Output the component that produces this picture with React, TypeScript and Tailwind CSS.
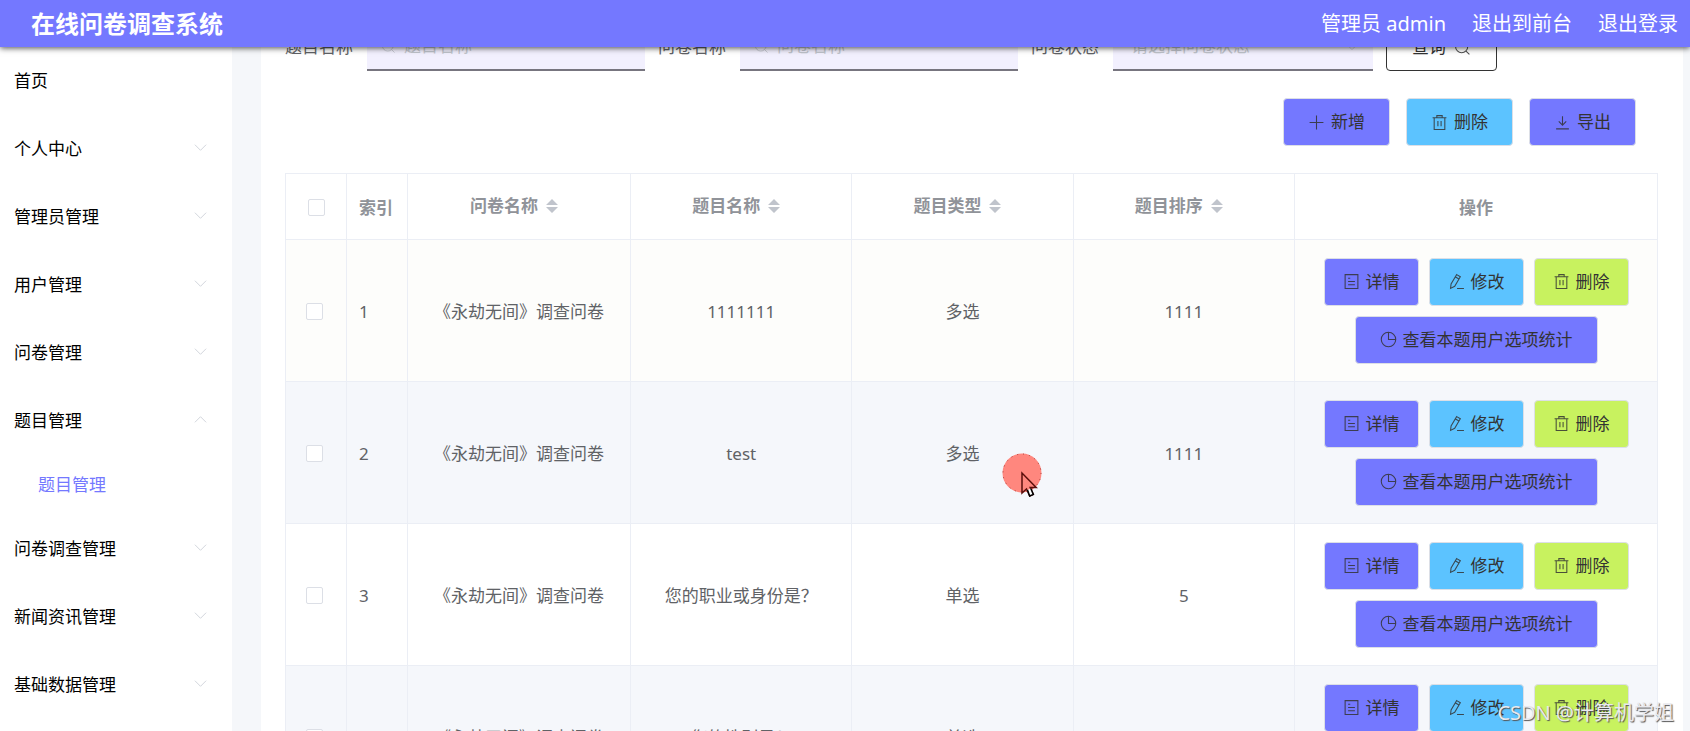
import React, { useState } from "react";
import clsx from "clsx";

interface MenuItem {
    title: string;
    children?: string[];
}

interface Question {
    id: number;
    paper: string;
    name: string;
    type: string;
    sort: number;
}

const menus: MenuItem[] = [
    { title: "首页" },
    { title: "个人中心", children: ["个人信息"] },
    { title: "管理员管理", children: ["管理员管理"] },
    { title: "用户管理", children: ["用户管理"] },
    { title: "问卷管理", children: ["问卷管理"] },
    { title: "题目管理", children: ["题目管理"] },
    { title: "问卷调查管理", children: ["问卷调查管理"] },
    { title: "新闻资讯管理", children: ["新闻资讯管理"] },
    { title: "基础数据管理", children: ["基础数据管理"] },
];

const questions: Question[] = [
    { id: 1, paper: "《永劫无间》调查问卷", name: "1111111", type: "多选", sort: 1111 },
    { id: 2, paper: "《永劫无间》调查问卷", name: "test", type: "多选", sort: 1111 },
    { id: 3, paper: "《永劫无间》调查问卷", name: "您的职业或身份是？", type: "单选", sort: 5 },
    { id: 4, paper: "《永劫无间》调查问卷", name: "您的性别是？", type: "单选", sort: 4 },
];

// Line icons, all on a 16x16 grid
const iconPaths = {
    plus: "M8 1.5v13M1.5 8h13",
    trash: "M1.5 3.5h13M3 3.5v11h10v-11M5.5 3.5v-2h5v2M6.5 6.5v5M9.5 6.5v5",
    download: "M8 2v8.5M4.5 7L8 10.5 11.5 7M2 14h12",
    doc: "M2 1.5h12v13H2zM4.8 5h2M4.8 8h6.4M4.8 11h6.4",
    edit: "M8.2 1.5l3.4 2-5.3 9-3.9 2 .5-4.2zM7 3.7l3.4 2M8.5 14.5h6.5",
    pie: "M8 1.2a6.8 6.8 0 1 0 6.8 6.8H8zM8 1.2A6.8 6.8 0 0 1 14.8 8",
    search: "M7.2 1.5a5.7 5.7 0 1 0 0 11.4 5.7 5.7 0 0 0 0-11.4zM11.3 11.3l3.2 3.2",
    down: "M2 5l6 6 6-6",
    up: "M2 11l6-6 6 6",
};

const Icon = ({
    name,
    className = "size-[17px]",
}: {
    name: keyof typeof iconPaths;
    className?: string;
}) => (
    <svg
        viewBox="0 0 16 16"
        fill="none"
        stroke="currentColor"
        strokeOpacity="0.85"
        className={clsx("shrink-0", className)}
        aria-hidden="true"
    >
        <path d={iconPaths[name]} />
    </svg>
);

const tones = {
    primary: "bg-[#7478ff]",
    info: "bg-[#5cc3ff]",
    danger: "bg-[#c8f25f]",
};

const ActionButton = ({
    icon,
    tone,
    wide,
    children,
}: {
    icon: keyof typeof iconPaths;
    tone: keyof typeof tones;
    wide?: boolean;
    children: React.ReactNode;
}) => (
    <button
        type="button"
        className={clsx(
            "flex h-12 items-center gap-1.5 rounded border border-[#dcdfe6] text-[#333]",
            wide ? "px-6" : "px-[18px]",
            tones[tone]
        )}
    >
        <Icon name={icon} />
        {children}
    </button>
);

const SearchInput = ({ id, label }: { id: string; label: string }) => (
    <div className="flex items-center">
        <label htmlFor={id} className="w-[82px]">
            {label}
        </label>
        <div className="flex h-12 w-[278px] items-center gap-2 border-b-2 border-[#77757f] bg-[#f2f0fe] pl-3.5 text-[#c0c4cc]">
            <Icon name="search" className="size-[15px]" />
            <input
                id={id}
                type="text"
                placeholder={label}
                className="w-full min-w-0 bg-transparent outline-none placeholder:text-[#c0c4cc]"
            />
        </div>
    </div>
);

const CheckBox = ({ label }: { label: string }) => (
    <input
        type="checkbox"
        aria-label={label}
        className="block size-[17px] appearance-none rounded-xs border border-[#dcdfe6] bg-white checked:bg-[#7478ff]"
    />
);

const SortHead = ({ children }: { children: React.ReactNode }) => (
    <th className="border border-[#ebeef5] pr-2.5 pb-0.5">
        <div className="flex items-center justify-center gap-2">
            {children}
            <svg viewBox="0 0 12 16" className="h-4 w-3 fill-[#c0c4cc]" aria-hidden="true">
                <path d="M6 1l6 6H0zM6 15l6-6H0z" />
            </svg>
        </div>
    </th>
);

const Header = () => (
    <header className="relative z-20 flex h-[47px] shrink-0 items-center justify-between bg-[#7478ff] pr-3 pl-[31px] text-white shadow-[0_1px_6px_rgba(0,0,0,0.7)]">
        <h1 className="text-2xl font-bold">在线问卷调查系统</h1>
        <nav className="flex gap-[26px] text-xl">
            <span>管理员 admin</span>
            <a href="#front">退出到前台</a>
            <a href="#login">退出登录</a>
        </nav>
    </header>
);

const Sidebar = () => {
    const [open, setOpen] = useState<string>("题目管理");

    return (
        <aside className="w-[232px] shrink-0 overflow-hidden bg-white text-black">
            {menus.map((menu) => (
                <div key={menu.title}>
                    <button
                        type="button"
                        onClick={() => setOpen(open === menu.title ? "" : menu.title)}
                        className="flex h-[68px] w-full items-center justify-between pr-6 pl-3.5"
                    >
                        {menu.title}
                        {menu.children && (
                            <Icon
                                name={open === menu.title ? "up" : "down"}
                                className="mb-1 size-[15px] text-[#c8ccd4]"
                            />
                        )}
                    </button>
                    {open === menu.title &&
                        menu.children?.map((child) => (
                            <a
                                key={child}
                                href="#question"
                                className="flex h-[60px] items-center pl-[38px] text-[#7478ff]"
                            >
                                {child}
                            </a>
                        ))}
                </div>
            ))}
        </aside>
    );
};

const QuestionTable = () => (
    <table className="w-full table-fixed border-collapse text-center text-[#606266]">
        <colgroup>
            <col className="w-[61px]" />
            <col className="w-[61px]" />
            <col className="w-[223px]" />
            <col />
            <col />
            <col />
            <col className="w-[363px]" />
        </colgroup>
        <thead>
            <tr className="h-[66px] text-[#909399]">
                <th className="border border-[#ebeef5] pt-0.5 pl-[22px]">
                    <CheckBox label="全选" />
                </th>
                <th className="border border-[#ebeef5] pt-0.5 pl-3 text-left">索引</th>
                <SortHead>问卷名称</SortHead>
                <SortHead>题目名称</SortHead>
                <SortHead>题目类型</SortHead>
                <SortHead>题目排序</SortHead>
                <th className="border border-[#ebeef5] pt-0.5">操作</th>
            </tr>
        </thead>
        <tbody>
            {questions.map((q, index) => (
                <tr
                    key={q.id}
                    className={clsx(
                        "h-[142px]",
                        index % 2 ? "bg-[#f5f7fb]" : index === 0 ? "bg-[#fdfdfb]" : "bg-white"
                    )}
                >
                    <td className="border border-[#ebeef5] pt-0.5 pl-5">
                        <CheckBox label={`选择 ${q.id}`} />
                    </td>
                    <td className="border border-[#ebeef5] pt-0.5 pl-3 text-left">{q.id}</td>
                    <td className="border border-[#ebeef5] pt-0.5">{q.paper}</td>
                    <td className="border border-[#ebeef5] pt-0.5">{q.name}</td>
                    <td className="border border-[#ebeef5] pt-0.5">{q.type}</td>
                    <td className="border border-[#ebeef5] pt-0.5">{q.sort}</td>
                    <td className="border border-[#ebeef5]">
                        <div className="flex flex-wrap justify-center gap-2.5">
                            <ActionButton icon="doc" tone="primary">
                                详情
                            </ActionButton>
                            <ActionButton icon="edit" tone="info">
                                修改
                            </ActionButton>
                            <ActionButton icon="trash" tone="danger">
                                删除
                            </ActionButton>
                            <ActionButton icon="pie" tone="primary" wide>
                                查看本题用户选项统计
                            </ActionButton>
                        </div>
                    </td>
                </tr>
            ))}
        </tbody>
    </table>
);

const App = () => (
    <div className="relative flex h-screen flex-col overflow-hidden bg-[#f5f7fa] font-['Noto_Sans','Noto_Sans_CJK_SC',sans-serif] text-[17px] leading-6">
        <Header />
        <div className="flex min-h-0 flex-1">
            <Sidebar />
            {/* The list is scrolled, the search form runs under the header */}
            <main className="-mt-6 mr-[7px] ml-[29px] min-w-0 flex-1 bg-white pr-[25px] pl-6">
                <form className="flex gap-[13px] text-[#606266]">
                    <SearchInput id="name" label="题目名称" />
                    <SearchInput id="paper" label="问卷名称" />
                    <div className="flex items-center">
                        <label htmlFor="status" className="w-[82px]">
                            问卷状态
                        </label>
                        <div className="relative flex items-center">
                            <select
                                id="status"
                                className="h-12 w-[260px] appearance-none border-b-2 border-[#77757f] bg-[#f2f0fe] pl-[18px] text-[#c0c4cc] outline-none"
                            >
                                <option>请选择问卷状态</option>
                            </select>
                            <span className="pointer-events-none absolute right-3.5 text-[#c0c4cc]">
                                <Icon name="down" className="size-3.5" />
                            </span>
                        </div>
                    </div>
                    <button
                        type="button"
                        className="flex h-12 items-center gap-2 rounded border border-[#333] px-[25px] text-[#333]"
                    >
                        查询
                        <Icon name="search" />
                    </button>
                </form>

                <div className="flex justify-end gap-4 py-[27px] pr-[22px]">
                    <ActionButton icon="plus" tone="primary" wide>
                        新增
                    </ActionButton>
                    <ActionButton icon="trash" tone="info" wide>
                        删除
                    </ActionButton>
                    <ActionButton icon="download" tone="primary" wide>
                        导出
                    </ActionButton>
                </div>

                <QuestionTable />
            </main>
        </div>

        {/* Mouse pointer with click highlight */}
        <svg
            viewBox="0 0 40 46"
            className="pointer-events-none absolute top-[453px] left-[1002px] z-30 h-[46px] w-10"
            aria-hidden="true"
        >
            <circle cx="20" cy="20" r="19.5" fill="#ff877e" />
            <circle
                cx="20"
                cy="20"
                r="19"
                fill="none"
                stroke="#a83a35"
                strokeDasharray="1 5"
            />
            <path
                d="M20 20v20l4.5-4 3.2 7 3.6-1.6-3.1-6.8h6z"
                fill="#ff877e"
                stroke="#5a0f0c"
                strokeWidth="1.5"
            />
            <path
                d="M25.5 37l2.2 6 3.6-1.6-2.4-5.6"
                fill="#fff"
                stroke="#000"
                strokeWidth="1.5"
            />
        </svg>

        <div className="pointer-events-none absolute right-4 bottom-1 z-30 text-xl text-[#e9e9ee] [text-shadow:1px_1px_1px_#555]">
            CSDN @计算机学姐
        </div>
    </div>
);

export default App;
